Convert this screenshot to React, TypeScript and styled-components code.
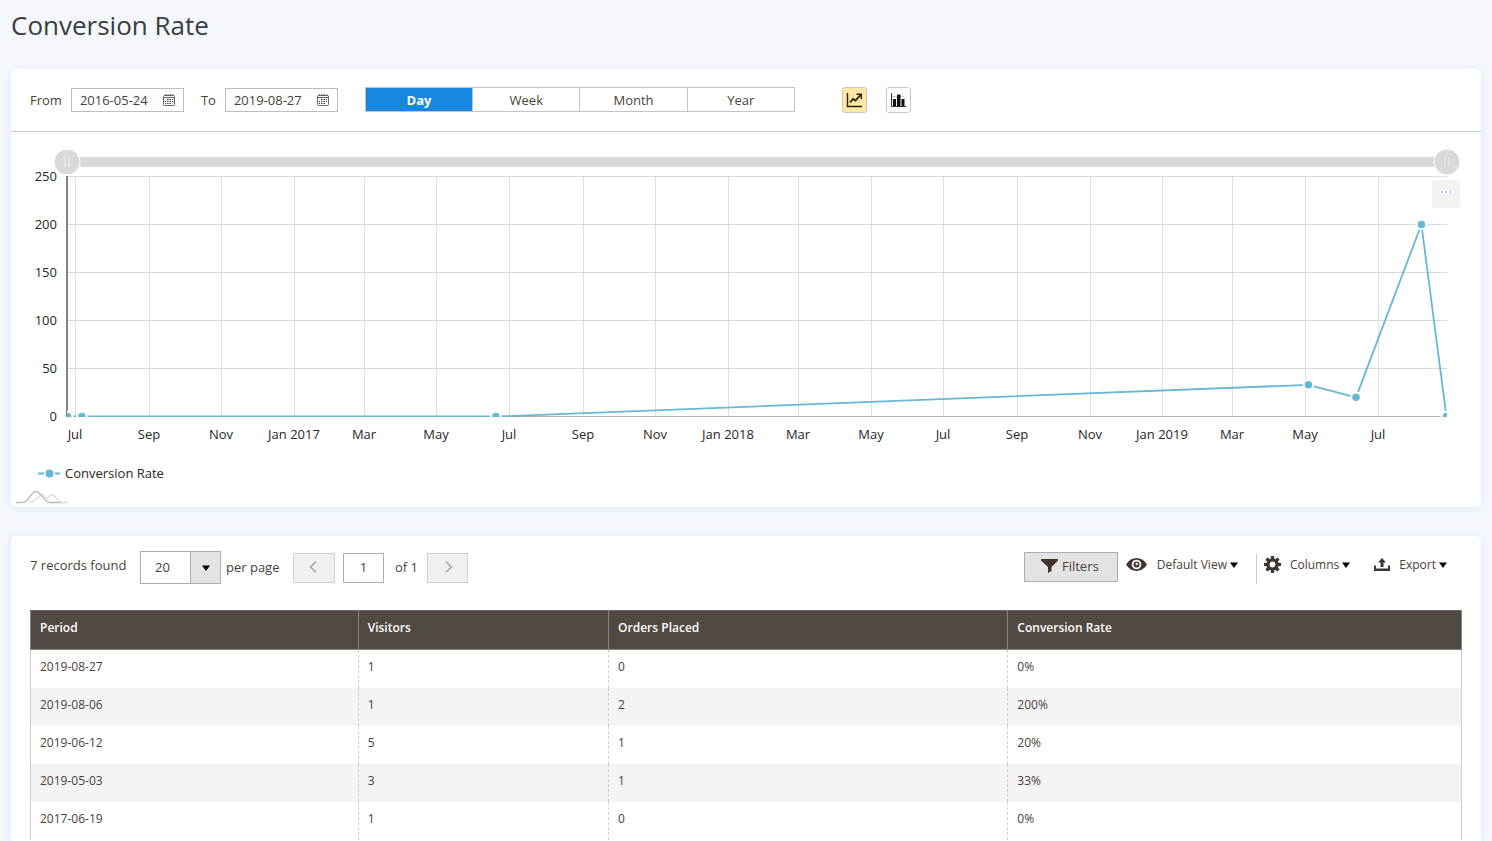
import React, { useLayoutEffect, useRef, useState } from "react";
import styled, { createGlobalStyle, css } from "styled-components";

const GlobalStyle = createGlobalStyle`
  *, *::before, *::after { box-sizing: border-box; }
  html { background: #f4f8fd; }
  body {
    margin: 0;
    color: #49403a;
    font: 13px/18px "Open Sans", "Noto Sans", sans-serif;
  }
  button, input, select { font: inherit; color: inherit; margin: 0; border-radius: 0; }
  button { cursor: pointer; }
`;

const Page = styled.main`
  display: flex;
  flex-direction: column;
  min-height: 100vh;
  padding: 0 11px;
`;

const Title = styled.h1`
  margin: 0;
  height: 69px;
  padding-top: 7px;
  font-size: 26px;
  line-height: 36px;
  font-weight: 400;
  color: #3c3c3c;
`;

const Card = styled.section`
  background: #fff;
  border-radius: 5px;
  box-shadow: 0 1px 8px rgba(120, 150, 225, 0.16);
  & + & { margin-top: 29px; }
`;

const ChartToolbar = styled.form`
  display: flex;
  align-items: center;
  height: 63px;
  padding: 0 19px;
  border-bottom: 1px solid #c9cbcb;
`;

const DateField = styled.div`
  display: flex;
  align-items: center;
  margin-right: 17px;
`;

const DateLabel = styled.label`
  margin-right: 9px;
`;

const DateBox = styled.div`
  display: flex;
  align-items: center;
  width: 113px;
  height: 24px;
  border: 1px solid #bdbdbd;
`;

const DateInput = styled.input`
  width: 88px;
  height: 22px;
  padding: 0 0 0 8px;
  border: 0;
  background: none;
`;

const IconButton = styled.button`
  display: flex;
  padding: 0;
  margin-left: 3px;
  border: 0;
  background: none;
`;

const Segments = styled.div`
  display: flex;
  width: 430px;
  height: 25px;
  margin: 0 0 1px 10px;
  border: 1px solid #c4c4c4;
`;

const Segment = styled.button<{ $active?: boolean }>`
  flex: 1;
  padding: 0;
  border: 0;
  background: #fff;
  line-height: 20px;
  & + & { border-left: 1px solid #c4c4c4; }
  ${(p) => p.$active && css`
    background: #1787e0;
    color: #fff;
    font-weight: 700;
  `}
`;

const ChartTypes = styled.div`
  display: flex;
  gap: 19px;
  margin-left: 47px;
`;

const ChartTypeButton = styled.button<{ $active?: boolean }>`
  display: flex;
  align-items: center;
  justify-content: center;
  width: 25px;
  height: 26px;
  padding: 0;
  border: 1px solid #c6c6c6;
  border-radius: 3px;
  background: ${(p) => (p.$active ? "#ffe8a6" : "#fff")};
`;

const ChartArea = styled.div`
  position: relative;
  height: 375px;
`;

const ChartSvg = styled.svg`
  display: block;
  width: 100%;
  height: 375px;
  fill: #262626;
`;

const ChartMenu = styled.button`
  position: absolute;
  top: 48px;
  right: 21px;
  display: flex;
  justify-content: center;
  width: 28px;
  height: 28px;
  padding: 11px 0 0;
  border: 0;
  border-radius: 3px;
  background: #f3f3f3;
`;

const GridCard = styled(Card)`
  flex: 1;
  padding: 15px 19px 0;
  border-radius: 5px 5px 0 0;
`;

const GridToolbar = styled.div`
  display: flex;
  align-items: flex-start;
  height: 59px;
`;

const Records = styled.span`
  width: 110px;
  padding-top: 5px;
`;

const SelectBox = styled.div`
  position: relative;
  width: 81px;
  height: 33px;
`;

const PageSize = styled.select`
  appearance: none;
  width: 81px;
  height: 33px;
  padding: 0 0 1px 14px;
  border: 1px solid #adadad;
  background: #fff;
`;

const SelectArrow = styled.span`
  position: absolute;
  top: 1px;
  right: 1px;
  display: flex;
  align-items: center;
  justify-content: center;
  width: 30px;
  height: 31px;
  border-left: 1px solid #adadad;
  background: #e3e3e3;
  pointer-events: none;
`;

const PerPage = styled.label`
  width: 72px;
  padding: 7px 0 0 5px;
`;

const Pager = styled.nav`
  display: flex;
  align-items: center;
  height: 30px;
  margin-top: 2px;
`;

const PagerButton = styled.button`
  display: flex;
  align-items: center;
  justify-content: center;
  width: 42px;
  height: 30px;
  padding: 0 2px 3px 0;
  border: 1px solid #d1d1d1;
  background: #f0f0f0;
  &:last-child { width: 41px; padding: 0 0 3px 2px; }
`;

const PageInput = styled.input`
  width: 41px;
  height: 30px;
  margin-left: 8px;
  padding: 0 0 2px;
  border: 1px solid #adadad;
  text-align: center;
`;

const PageTotal = styled.span`
  width: 43px;
  padding: 0 0 2px 11px;
`;

const Actions = styled.div`
  display: flex;
  align-items: flex-start;
  margin-left: auto;
  padding: 1px 15px 0 0;
`;

const FiltersButton = styled.button`
  display: flex;
  align-items: center;
  justify-content: center;
  gap: 4px;
  width: 94px;
  height: 30px;
  padding: 0 2px 2px 0;
  border: 1px solid #adadad;
  background: #e3e3e3;
`;

const ActionButton = styled.button<{ $iconWidth: number; $gap: number }>`
  display: grid;
  grid-template-columns: ${(p) => p.$iconWidth}px auto 8px;
  align-items: center;
  height: 24px;
  padding: 0;
  border: 0;
  background: none;
  font-size: 12px;
  line-height: 24px;
  & > span { padding: 1px 3px 0 ${(p) => p.$gap}px; white-space: nowrap; }
`;

const ViewAction = styled.div`
  height: 30px;
  margin: 2px 7px 0 8px;
  padding: 0 18px 0 0;
  border-right: 1px solid #ccc;
  & > button { margin-top: -2px; }
`;

const ColumnsAction = styled.div`
  margin-right: 24px;
`;

const Table = styled.table`
  width: 100%;
  table-layout: fixed;
  border-collapse: collapse;
  font-size: 12px;
  line-height: 18px;
`;

const HeadCell = styled.th<{ $width?: string }>`
  width: ${(p) => p.$width || "auto"};
  height: 39px;
  padding: 8px 9px 12px;
  border: 1px solid #8a837f;
  border-color: #6f6661 #8a837f #8a837f;
  background: #514943;
  color: #fff;
  font-weight: 600;
  text-align: left;
  vertical-align: top;
`;

const Row = styled.tr`
  &:nth-child(even) { background: #f4f4f4; }
`;

const Cell = styled.td`
  height: 38px;
  padding: 8px 9px 12px;
  border-left: 1px dashed #d0d0d0;
  border-right: 1px dashed #d0d0d0;
  vertical-align: top;
  &:first-child { border-left: 1px solid #ccc; }
  &:last-child { border-right: 1px solid #ccc; }
`;

const DAY = 86400000;
const START = Date.UTC(2016, 5, 24);
const END = Date.UTC(2019, 7, 28);
const BLUE = "#67b7d5";
const GRID_ROWS = 5;

const records = [
  ["2019-08-27", 1, 0, 0],
  ["2019-08-06", 1, 2, 200],
  ["2019-06-12", 5, 1, 20],
  ["2019-05-03", 3, 1, 33],
  ["2017-06-19", 1, 0, 0],
  ["2016-07-06", 1, 0, 0],
  ["2016-06-24", 1, 0, 0],
] as [string, number, number, number][];

const MONTHS = ["Jan", "", "Mar", "", "May", "", "Jul", "", "Sep", "", "Nov"];

const ticks = Array.from({ length: 19 }, (_, i) => {
  const month = (6 + i * 2) % 12;
  const year = 2016 + Math.floor((6 + i * 2) / 12);
  return {
    time: Date.UTC(year, month, 1),
    label: month === 0 ? `Jan ${year}` : MONTHS[month],
  };
});

function Caret() {
  return (
    <svg width="8" height="6" viewBox="0 0 8 6" aria-hidden="true">
      <path d="M0 .5h8L4 6z" fill="#000" />
    </svg>
  );
}

function CalendarIcon() {
  return (
    <svg width="12" height="12" viewBox="0 0 12 12" aria-hidden="true">
      <path d="M1.500 1.500h9a1 1 0 0 1 1 1v8a1 1 0 0 1-1 1h-9a1 1 0 0 1-1-1v-8a1 1 0 0 1 1-1zM.5 3.500h11" fill="none" stroke="#6a625d" />
      <path d="M2.500 0v2M5 0v2M7.500 0v2M10 0v2" stroke="#6a625d" />
      <path d="M4 5h1.500v1H4zM6.500 5H8v1H6.500zM9 5h1v1H9zM2 7h1v1H2zM4 7h1.500v1H4zM6.500 7H8v1H6.500zM9 7h1v1H9zM2 9h1v1H2zM4 9h1.500v1H4zM6.500 9H8v1H6.500z" fill="#41362f" />
    </svg>
  );
}

function LineIcon() {
  return (
    <svg width="17" height="16" viewBox="0 0 17 16" fill="none" stroke="#2a1d0c" aria-hidden="true">
      <path d="M1.500 1v13.500H16" strokeWidth="1.400" />
      <path d="M4 10.500l3-3.500 2.500 1.500L14.500 3" strokeWidth="1.800" />
      <path d="M10.500 2.200h4.800V7" strokeWidth="1.500" />
    </svg>
  );
}

function BarsIcon() {
  return (
    <svg width="16" height="16" viewBox="0 0 16 16" aria-hidden="true">
      <path d="M1.500 1v13.500H16" stroke="#333" fill="none" />
      <path d="M2 4.500h12M2 7.500h12M2 10.500h12" stroke="#ccc" />
      <path d="M3 7h3v7H3zM7 2.500h3.500V14H7zM11.500 7h3v7h-3z" fill="#111" />
    </svg>
  );
}

function Chevron({ right }: { right?: boolean }) {
  return (
    <svg width="8" height="12" viewBox="0 0 8 12" fill="none" stroke="#a39e9a" strokeWidth="1.300" aria-hidden="true">
      <path d={right ? "M1 .7L6.500 6 1 11.300" : "M7 .7L1.500 6 7 11.300"} />
    </svg>
  );
}

function FunnelIcon() {
  return (
    <svg width="17" height="14" viewBox="0 0 17 14" aria-hidden="true">
      <path d="M0 0h17v1.500L10.500 8v4L7 14V8L0 1.500z" fill="#41362f" />
    </svg>
  );
}

function EyeIcon() {
  return (
    <svg width="21" height="13" viewBox="0 0 21 13" aria-hidden="true">
      <path d="M0 6.500C3 2 6.500 0 10.500 0S18 2 21 6.500C18 11 14.500 13 10.500 13S3 11 0 6.500z" fill="#41362f" />
      <circle cx="10.500" cy="6.500" r="4.800" fill="#fff" />
      <circle cx="10.500" cy="6.500" r="3" fill="#41362f" />
      <circle cx="10.700" cy="6" r="1.200" fill="#fff" />
    </svg>
  );
}

function GearIcon() {
  return (
    <svg width="17" height="17" viewBox="0 0 17 17" aria-hidden="true">
      <g fill="#41362f">
        {[0, 45, 90, 135].map((angle) => (
          <path key={angle} d="M7 0h3l.5 4v9l-.5 4H7l-.5-4V4z" transform={`rotate(${angle} 8.500 8.500)`} />
        ))}
        <circle cx="8.500" cy="8.500" r="6" />
      </g>
      <circle cx="8.500" cy="8.500" r="2.900" fill="#fff" />
    </svg>
  );
}

function ExportIcon() {
  return (
    <svg width="16" height="13" viewBox="0 0 16 13" fill="#41362f" aria-hidden="true">
      <path d="M8 0l4 4.500H9.500V9h-3V4.500H4z" />
      <path d="M0 7.500h2v3h12v-3h2V13H0z" />
    </svg>
  );
}

function Handle({ x }: { x: number }) {
  return (
    <g>
      <circle cx={x} cy="30" r="13" fill="#d9d9d9" stroke="#fff" />
      <path d={`M${x - 2} 25v10M${x + 2} 25v10`} stroke="#ececec" />
    </g>
  );
}

function ConversionChart() {
  const ref = useRef<HTMLDivElement>(null);
  const [width, setWidth] = useState(1200);

  useLayoutEffect(() => {
    const el = ref.current!;
    const update = () => setWidth(el.clientWidth);
    update();
    const observer = new ResizeObserver(update);
    observer.observe(el);
    return () => observer.disconnect();
  }, []);

  const left = 56;
  const right = width - 34;
  const x = (time: number) => left + ((time - START) / (END - START)) * (right - left);
  const y = (value: number) => 284.5 - (value * 240) / 250;
  const points = records
    .map(([date, , , rate]) => ({ x: x(Date.parse(date) + DAY / 2), y: y(rate) }))
    .reverse();

  return (
    <ChartArea ref={ref}>
      <ChartSvg role="img" aria-label="Conversion rate by day">
        <defs>
          <clipPath id="plot">
            <rect x={left} y="44" width={right - left} height="241" />
          </clipPath>
        </defs>
        {ticks.map(({ time }) => (
          <line key={time} x1={Math.floor(x(time)) + 0.5} x2={Math.floor(x(time)) + 0.5} y1="44" y2="284" stroke="#dedede" />
        ))}
        {[0, 50, 100, 150, 200, 250].map((value) => (
          <g key={value}>
            <line x1={left} x2={right} y1={y(value)} y2={y(value)} stroke={value ? "#d9d9d9" : "#b0b0b0"} />
            <text x="46" y={y(value) + 4.5} textAnchor="end">{value}</text>
          </g>
        ))}
        {ticks.map(({ time, label }) => (
          <text key={time} x={Math.floor(x(time))} y="307" textAnchor="middle">{label}</text>
        ))}
        <line x1={left} x2={left} y1="44" y2="285" stroke="#333" strokeWidth="1.200" />
        <g clipPath="url(#plot)">
          <polyline points={points.map((p) => `${p.x},${p.y}`).join(" ")} fill="none" stroke={BLUE} strokeWidth="1.800" />
          {points.map((p) => (
            <circle key={p.x} cx={p.x} cy={p.y} r="4.800" fill={BLUE} stroke="#fff" strokeWidth="2" />
          ))}
        </g>
        <rect x={left} y="25" width={right - left} height="10" fill="#d9d9d9" />
        <Handle x={left} />
        <Handle x={right} />
        <path d="M27 341.500h6M44 341.500h5" stroke={BLUE} strokeWidth="2" />
        <circle cx="38.500" cy="341.500" r="4" fill={BLUE} />
        <text x="54" y="346">Conversion Rate</text>
        <g fill="none" strokeWidth="1.500">
          <path d="M18 370.500c8 0 9-8 13-8 3 0 3 4 5 4s3-4 5-4c4 0 4 8 10 8h6" stroke="#dedede" />
          <path d="M5 370.500h6c8 0 8-11 14-11s7 11 14 11h11" stroke="#bdbdbd" />
        </g>
      </ChartSvg>
      <ChartMenu type="button" aria-label="Chart menu">
        <svg width="10" height="3" viewBox="0 0 10 3" fill="#cdcdea" aria-hidden="true">
          <path d="M0 0h2v2H0zM4 0h2v2H4zM8 0h2v2H8z" />
        </svg>
      </ChartMenu>
    </ChartArea>
  );
}

function DatePicker({ id, label, value }: { id: string; label: string; value: string }) {
  return (
    <DateField>
      <DateLabel htmlFor={id}>{label}</DateLabel>
      <DateBox>
        <DateInput id={id} defaultValue={value} />
        <IconButton type="button" aria-label={`Pick ${label} date`}>
          <CalendarIcon />
        </IconButton>
      </DateBox>
    </DateField>
  );
}

export default function App() {
  const [period, setPeriod] = useState("Day");
  const [type, setType] = useState("line");

  return (
    <>
      <GlobalStyle />
      <Page>
        <Title>Conversion Rate</Title>
        <Card>
          <ChartToolbar>
            <DatePicker id="from" label="From" value="2016-05-24" />
            <DatePicker id="to" label="To" value="2019-08-27" />
            <Segments role="group" aria-label="Period">
              {["Day", "Week", "Month", "Year"].map((name) => (
                <Segment key={name} type="button" $active={name === period} onClick={() => setPeriod(name)}>
                  {name}
                </Segment>
              ))}
            </Segments>
            <ChartTypes>
              <ChartTypeButton type="button" aria-label="Line chart" $active={type === "line"} onClick={() => setType("line")}>
                <LineIcon />
              </ChartTypeButton>
              <ChartTypeButton type="button" aria-label="Bar chart" $active={type === "bar"} onClick={() => setType("bar")}>
                <BarsIcon />
              </ChartTypeButton>
            </ChartTypes>
          </ChartToolbar>
          <ConversionChart />
        </Card>
        <GridCard>
          <GridToolbar>
            <Records>{records.length} records found</Records>
            <SelectBox>
              <PageSize id="page-size" defaultValue="20">
                <option>20</option>
                <option>50</option>
                <option>100</option>
              </PageSize>
              <SelectArrow><Caret /></SelectArrow>
            </SelectBox>
            <PerPage htmlFor="page-size">per page</PerPage>
            <Pager aria-label="Pages">
              <PagerButton type="button" aria-label="Previous page"><Chevron /></PagerButton>
              <PageInput aria-label="Page" defaultValue="1" />
              <PageTotal>of 1</PageTotal>
              <PagerButton type="button" aria-label="Next page"><Chevron right /></PagerButton>
            </Pager>
            <Actions>
              <FiltersButton type="button"><FunnelIcon />Filters</FiltersButton>
              <ViewAction>
                <ActionButton type="button" $iconWidth={21} $gap={10}>
                  <EyeIcon /><span>Default View</span><Caret />
                </ActionButton>
              </ViewAction>
              <ColumnsAction>
                <ActionButton type="button" $iconWidth={17} $gap={9}>
                  <GearIcon /><span>Columns</span><Caret />
                </ActionButton>
              </ColumnsAction>
              <ActionButton type="button" $iconWidth={16} $gap={9}>
                <ExportIcon /><span>Export</span><Caret />
              </ActionButton>
            </Actions>
          </GridToolbar>
          <Table>
            <thead>
              <tr>
                <HeadCell $width="22.9%">Period</HeadCell>
                <HeadCell $width="17.5%">Visitors</HeadCell>
                <HeadCell $width="27.9%">Orders Placed</HeadCell>
                <HeadCell>Conversion Rate</HeadCell>
              </tr>
            </thead>
            <tbody>
              {records.slice(0, GRID_ROWS).map(([date, visitors, orders, rate]) => (
                <Row key={date}>
                  <Cell>{date}</Cell>
                  <Cell>{visitors}</Cell>
                  <Cell>{orders}</Cell>
                  <Cell>{rate}%</Cell>
                </Row>
              ))}
            </tbody>
          </Table>
        </GridCard>
      </Page>
    </>
  );
}
